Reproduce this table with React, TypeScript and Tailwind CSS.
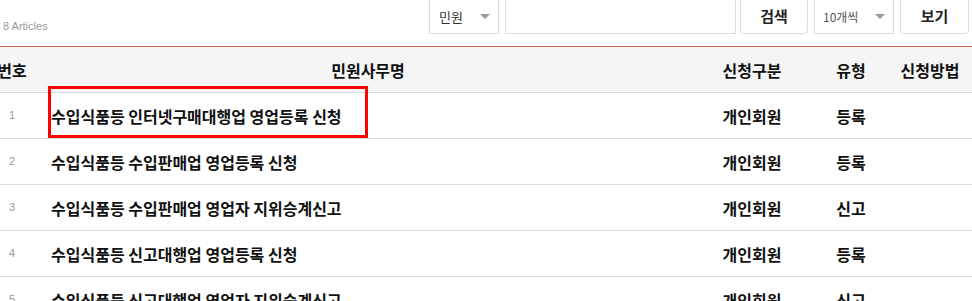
import React from 'react';

type Row = { no: number; title: string; kind: string; type: string };

const rows: Row[] = [
  { no: 1, title: '수입식품등 인터넷구매대행업 영업등록 신청', kind: '개인회원', type: '등록' },
  { no: 2, title: '수입식품등 수입판매업 영업등록 신청', kind: '개인회원', type: '등록' },
  { no: 3, title: '수입식품등 수입판매업 영업자 지위승계신고', kind: '개인회원', type: '신고' },
  { no: 4, title: '수입식품등 신고대행업 영업등록 신청', kind: '개인회원', type: '등록' },
  { no: 5, title: '수입식품등 신고대행업 영업자 지위승계신고', kind: '개인회원', type: '신고' },
];

const Caret = () => (
  <svg width="10" height="5" viewBox="0 0 10 5" className="shrink-0">
    <path d="M0 0 L10 0 L5 5 Z" fill="#9a9a9a" />
  </svg>
);

const App: React.FC = () => {
  return (
    <div
      className="w-[972px] h-[301px] overflow-hidden bg-white text-[#111]"
      style={{ fontFamily: '"Malgun Gothic", "Noto Sans CJK KR", "Liberation Sans", sans-serif' }}
    >
      {/* toolbar */}
      <div className="h-[46px] flex items-start">
        <div className="pt-[18px] pl-[3px] text-[11px] text-[#999] font-['Liberation_Sans','Noto_Sans_CJK_KR',sans-serif]">
          8 Articles
        </div>
        <div className="ml-auto flex items-start -mt-[4px] mr-[3px]">
          <div className="w-[70px] h-[38px] border border-[#ddd] bg-white flex items-center justify-between pl-[9px] pr-[8px] pt-[3px] text-[13px] text-[#333]">
            <span>민원</span>
            <Caret />
          </div>
          <div className="ml-[6px] w-[231px] h-[38px] border border-[#ddd] bg-white" />
          <button className="ml-[4px] w-[68px] h-[38px] border border-[#ddd] rounded-[4px] bg-white text-[15px] font-bold text-[#222] pt-[3px]">
            검색
          </button>
          <div className="ml-[6px] w-[80px] h-[38px] border border-[#ddd] bg-white flex items-center justify-between pl-[8px] pr-[8px] pt-[3px] text-[12px] text-[#555]">
            <span>10개씩</span>
            <Caret />
          </div>
          <button className="ml-[6px] w-[69px] h-[38px] border border-[#ddd] rounded-[4px] bg-white text-[15px] font-bold text-[#222] pt-[3px]">
            보기
          </button>
        </div>
      </div>

      {/* table */}
      <div className="border-t border-[#c96a4f]">
        <div className="h-[46px] flex items-center bg-[#f5f5f5] border-b border-[#dcdcdc] text-[16px] font-bold text-[#111]">
          <div className="w-[24px] flex justify-center whitespace-nowrap">번호</div>
          <div className="w-[688px] flex justify-center">민원사무명</div>
          <div className="w-[80px] flex justify-center whitespace-nowrap">신청구분</div>
          <div className="w-[118px] flex justify-center">유형</div>
          <div className="w-[40px] flex justify-center whitespace-nowrap">신청방법</div>
        </div>
        {rows.map((r) => (
          <div key={r.no} className="h-[46px] flex items-center border-b border-[#dcdcdc] text-[16px] font-bold text-[#111]">
            <div className="w-[24px] flex justify-center text-[11px] font-normal text-[#999] font-['Liberation_Sans',sans-serif]">
              {r.no}
            </div>
            <div className="w-[688px] pl-[27px] relative h-full flex items-center">
              {r.no === 1 && (
                <div className="absolute left-[24px] top-[-7px] w-[320px] h-[52px] border-[3px] border-[#ff0000]" />
              )}
              <span className="relative whitespace-nowrap">{r.title}</span>
            </div>
            <div className="w-[80px] flex justify-center whitespace-nowrap">{r.kind}</div>
            <div className="w-[118px] flex justify-center">{r.type}</div>
            <div className="w-[40px]" />
          </div>
        ))}
      </div>
    </div>
  );
};

export default App;
